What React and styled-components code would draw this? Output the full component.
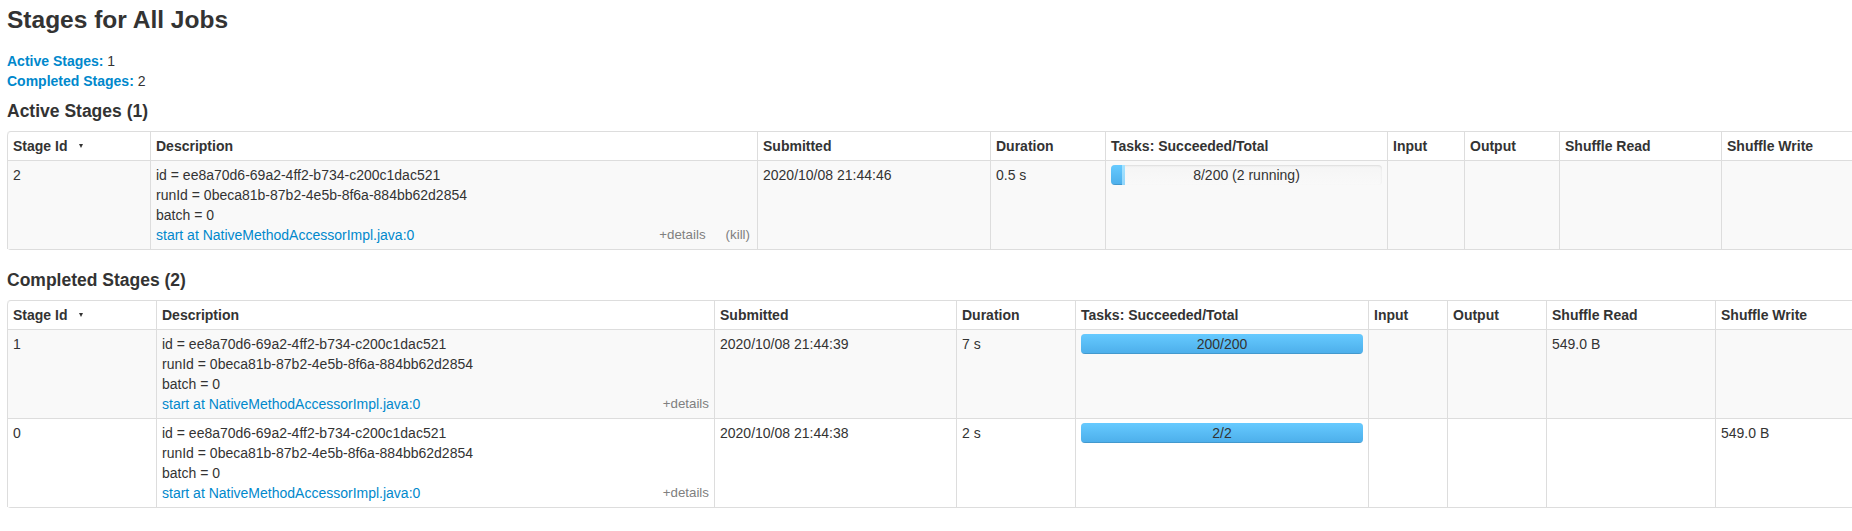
import React from "react";
import styled, { createGlobalStyle } from "styled-components";

const GlobalStyle = createGlobalStyle`
  html, body {
    margin: 0;
    padding: 0;
    overflow: hidden;
    background: #ffffff;
  }
  body {
    font-family: "Liberation Sans", Arial, Helvetica, sans-serif;
    font-size: 14px;
    line-height: 20px;
    color: #333333;
  }
`;

const Page = styled.div`
  padding: 0 0 0 7px;
`;

const Title = styled.h3`
  margin: 0 0 11px;
  font-size: 24.5px;
  line-height: 40px;
  font-weight: bold;
  color: #333333;
`;

const SummaryList = styled.ul`
  list-style: none;
  margin: 0 0 10px;
  padding: 0;
`;

const SummaryItem = styled.li`
  line-height: 20px;
`;

const SummaryLink = styled.a`
  color: #0088cc;
  font-weight: bold;
  text-decoration: none;
`;

const SectionTitle = styled.h4`
  margin: 10px 0;
  font-size: 17.5px;
  line-height: 20px;
  font-weight: bold;
  color: #333333;
`;

const Table = styled.table`
  table-layout: fixed;
  width: ${(p) => p.$width}px;
  border-collapse: separate;
  border-spacing: 0;
  border: 1px solid #dddddd;
  border-left: 0;
  border-radius: 4px;
  margin-bottom: 20px;
`;

const Col = styled.col`
  width: ${(p) => p.$w}px;
`;

const HeadCell = styled.th`
  padding: 4px 5px;
  height: 20px;
  text-align: left;
  vertical-align: top;
  font-weight: bold;
  line-height: 20px;
  border-left: 1px solid #dddddd;
  background: #ffffff;
  white-space: nowrap;
  overflow: hidden;
  &:first-child {
    border-top-left-radius: 4px;
  }
`;

const SortArrow = styled.span`
  display: inline-block;
  margin-left: 12px;
  width: 0;
  height: 0;
  border-left: 2px solid transparent;
  border-right: 2px solid transparent;
  border-top: 4px solid #333333;
  vertical-align: 3px;
`;

const Row = styled.tr`
  background: ${(p) => (p.$striped ? "#f9f9f9" : "#ffffff")};
`;

const Cell = styled.td`
  padding: 4px 5px;
  text-align: left;
  vertical-align: top;
  line-height: 20px;
  border-left: 1px solid #dddddd;
  border-top: 1px solid #dddddd;
  overflow: hidden;
`;

const DescLines = styled.div`
  white-space: nowrap;
`;

const LastLine = styled.div`
  display: flex;
  align-items: flex-start;
  height: 20px;
  line-height: 20px;
  white-space: nowrap;
`;

const NameLink = styled.a`
  flex: 1;
  color: #0088cc;
  text-decoration: none;
`;

const Details = styled.span`
  font-size: 13.33px;
  line-height: 20px;
  color: #808080;
  cursor: pointer;
`;

const KillLink = styled.a`
  font-size: 13.33px;
  line-height: 20px;
  color: #808080;
  margin-left: 20px;
  margin-right: 2px;
  text-decoration: none;
`;

const Progress = styled.div`
  position: relative;
  display: flex;
  height: 20px;
  border-radius: 4px;
  overflow: hidden;
  background: linear-gradient(to bottom, #f5f5f5, #f9f9f9);
  box-shadow: inset 0 1px 2px rgba(0, 0, 0, 0.1);
`;

const CompletedBar = styled.div`
  height: 100%;
  background: linear-gradient(to bottom, #66caff, #4caeea);
  box-shadow: inset 0 -1px 0 rgba(0, 0, 0, 0.12);
`;

const StartedBar = styled.div`
  height: 100%;
  background: linear-gradient(to bottom, #a6e3ff, #92d6fb);
`;

const ProgressLabel = styled.span`
  position: absolute;
  left: 0;
  right: 0;
  top: 0;
  text-align: center;
  line-height: 20px;
  color: #333333;
`;

const headers = [
  "Stage Id",
  "Description",
  "Submitted",
  "Duration",
  "Tasks: Succeeded/Total",
  "Input",
  "Output",
  "Shuffle Read",
  "Shuffle Write",
];

const descLines = [
  "id = ee8a70d6-69a2-4ff2-b734-c200c1dac521",
  "runId = 0beca81b-87b2-4e5b-8f6a-884bb62d2854",
  "batch = 0",
];

const activeStages = [
  {
    id: "2",
    submitted: "2020/10/08 21:44:46",
    duration: "0.5 s",
    done: 8,
    running: 2,
    total: 200,
    label: "8/200 (2 running)",
    input: "",
    output: "",
    read: "",
    write: "",
    kill: true,
  },
];

const completedStages = [
  {
    id: "1",
    submitted: "2020/10/08 21:44:39",
    duration: "7 s",
    done: 200,
    running: 0,
    total: 200,
    label: "200/200",
    input: "",
    output: "",
    read: "549.0 B",
    write: "",
  },
  {
    id: "0",
    submitted: "2020/10/08 21:44:38",
    duration: "2 s",
    done: 2,
    running: 0,
    total: 2,
    label: "2/2",
    input: "",
    output: "",
    read: "",
    write: "549.0 B",
  },
];

function StageTable({ widths, stages }) {
  const total = widths.reduce((a, b) => a + b, 0) + 1;
  return (
    <Table $width={total}>
      <colgroup>
        {widths.map((w, i) => (
          <Col key={i} $w={w} />
        ))}
      </colgroup>
      <thead>
        <tr>
          {headers.map((h, i) => (
            <HeadCell key={h}>
              {h}
              {i === 0 && <SortArrow />}
            </HeadCell>
          ))}
        </tr>
      </thead>
      <tbody>
        {stages.map((s, idx) => (
          <Row key={s.id} $striped={idx % 2 === 0}>
            <Cell>{s.id}</Cell>
            <Cell>
              <DescLines>
                {descLines.map((l) => (
                  <div key={l}>{l}</div>
                ))}
              </DescLines>
              <LastLine>
                <NameLink href="#">start at NativeMethodAccessorImpl.java:0</NameLink>
                <Details>+details</Details>
                {s.kill && <KillLink href="#">(kill)</KillLink>}
              </LastLine>
            </Cell>
            <Cell>{s.submitted}</Cell>
            <Cell>{s.duration}</Cell>
            <Cell>
              <Progress>
                <CompletedBar style={{ width: `${(s.done / s.total) * 100}%` }} />
                {s.running > 0 && (
                  <StartedBar style={{ width: `${(s.running / s.total) * 100}%` }} />
                )}
                <ProgressLabel>{s.label}</ProgressLabel>
              </Progress>
            </Cell>
            <Cell>{s.input}</Cell>
            <Cell>{s.output}</Cell>
            <Cell>{s.read}</Cell>
            <Cell>{s.write}</Cell>
          </Row>
        ))}
      </tbody>
    </Table>
  );
}

export default function App() {
  return (
    <Page>
      <GlobalStyle />
      <Title>Stages for All Jobs</Title>
      <SummaryList>
        <SummaryItem>
          <SummaryLink href="#active">Active Stages:</SummaryLink> 1
        </SummaryItem>
        <SummaryItem>
          <SummaryLink href="#completed">Completed Stages:</SummaryLink> 2
        </SummaryItem>
      </SummaryList>
      <SectionTitle>Active Stages (1)</SectionTitle>
      <StageTable
        widths={[143, 607, 233, 115, 282, 77, 95, 162, 180]}
        stages={activeStages}
      />
      <SectionTitle>Completed Stages (2)</SectionTitle>
      <StageTable
        widths={[149, 558, 242, 119, 293, 79, 99, 169, 180]}
        stages={completedStages}
      />
    </Page>
  );
}
